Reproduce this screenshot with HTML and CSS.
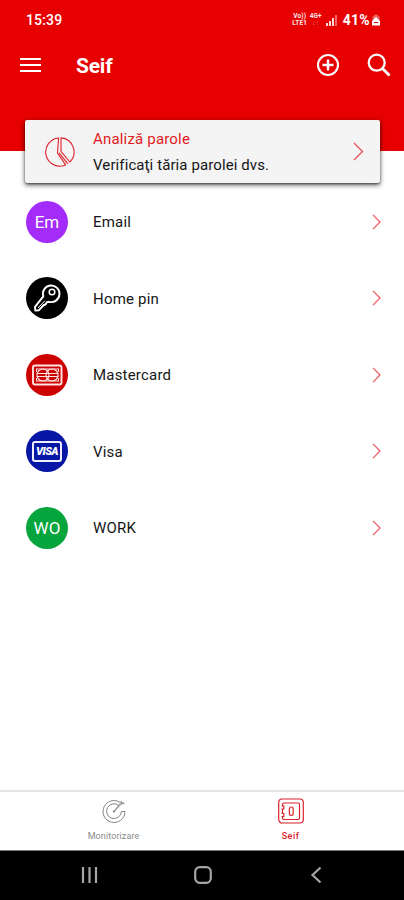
FILE: index.html
```
<!DOCTYPE html>
<html lang="ro">
<head>
<meta charset="utf-8">
<title>Seif</title>
<link rel="stylesheet" href="styles.css">
</head>
<body>
<div class="screen">
  <header class="header">
    <div class="status">
      <span class="time">15:39</span>
      <div class="indicators">
        <span class="net"><span>Vo))</span><span>LTE1</span></span>
        <span class="net net-data"><span>4G+</span><span class="faint">↓↑</span></span>
        <svg class="signal" width="12" height="12" viewBox="0 0 12 12"><path d="M0 9h2v3H0zM3 7h2v5H3zM6 4h2v8H6z" fill="#fff" opacity=".85"/><path d="M9 1h2v11H9z" fill="#fff" opacity=".4"/></svg>
        <span class="battery-level">41%</span>
        <svg class="battery" width="10" height="12" viewBox="0 0 10 12"><path d="M3 .8h4v1.500h1.500V6h-7V2.300H3z" fill="#fff" opacity=".4"/><path d="M1 7 5 3l4 4v4.500H1z" fill="#fff"/><path d="M3 8.500h4" stroke="#e60000"/></svg>
      </div>
    </div>
    <div class="toolbar">
      <svg class="menu" width="22" height="16" viewBox="0 0 22 16"><path d="M0 2h21M0 8h21M0 14h21" stroke="#fff" stroke-width="2.100"/></svg>
      <h1 class="title">Seif</h1>
      <svg class="add" width="24" height="24" viewBox="0 0 24 24" fill="none" stroke="#fff" stroke-width="2.100"><circle cx="12" cy="12" r="10"/><path d="M12 6.500v11M6.500 12h11" stroke-width="2.400"/></svg>
      <svg class="search" width="24" height="24" viewBox="0 0 24 24" fill="none" stroke="#fff" stroke-width="2.300"><circle cx="9.700" cy="9.700" r="8"/><path d="m15.500 15.500 7 7" stroke-width="2.800"/></svg>
    </div>
  </header>

  <section class="card">
    <svg class="pie" width="30" height="30" viewBox="0 0 30 30" fill="none" stroke="#dc1e28" stroke-width="1.100" stroke-linejoin="round"><path d="M13.600 1A14.100 14.100 0 1 0 20.600 27.900L12.500 16z"/><path d="M16 .9A14.100 14.100 0 0 1 24.800 25L16 14.300z"/><path d="m14 15.800 8.900 11"/></svg>
    <div class="card-text">
      <div class="card-title"><span>Analiză parole</span></div>
      <div class="card-sub"><span>Verificaţi tăria parolei dvs.</span></div>
    </div>
    <svg class="card-chevron" width="11" height="19" viewBox="0 0 11 19" fill="none" stroke="#e84a52" stroke-width="1.200"><path d="m1 1 8.500 8.500L1 18"/></svg>
  </section>

  <main class="list">
    <div class="row">
      <span class="avatar purple">Em</span>
      <span class="name">Email</span>
      <svg class="chevron" width="9" height="16" viewBox="0 0 9 16"><path d="m1 .8 7 7.200-7 7.200"/></svg>
    </div>
    <div class="row">
      <span class="avatar black"><svg width="42" height="42" viewBox="0 0 42 42" fill="none" stroke="#fff" stroke-width="1.900" stroke-linejoin="round"><path d="M17.300 19.300A8.300 8.300 0 1 1 23 24.800L20.800 25.200 19.600 27.500 17.700 28 13 33.200 9.300 33.500 9 29.900z"/><circle cx="26" cy="15" r="2.800" stroke-width="1.500"/><path d="m12 31 7-7.300" stroke-width="1"/></svg></span>
      <span class="name">Home pin</span>
      <svg class="chevron" width="9" height="16" viewBox="0 0 9 16"><path d="m1 .8 7 7.200-7 7.200"/></svg>
    </div>
    <div class="row">
      <span class="avatar red"><svg width="42" height="42" viewBox="0 0 42 42" fill="none" stroke="#ffe4e4"><rect x="7" y="11.500" width="28.500" height="19" rx="2" stroke-width="1.900"/><g stroke-width="1.100"><circle cx="17" cy="21" r="6"/><circle cx="26" cy="21" r="6"/><path d="M10.500 19.500h22M10.500 22.500h22M10.500 18v-3h22v3M10.500 24v3h22v-3"/></g></svg></span>
      <span class="name">Mastercard</span>
      <svg class="chevron" width="9" height="16" viewBox="0 0 9 16"><path d="m1 .8 7 7.200-7 7.200"/></svg>
    </div>
    <div class="row">
      <span class="avatar blue"><span class="visa">VISA</span></span>
      <span class="name">Visa</span>
      <svg class="chevron" width="9" height="16" viewBox="0 0 9 16"><path d="m1 .8 7 7.200-7 7.200"/></svg>
    </div>
    <div class="row">
      <span class="avatar green">WO</span>
      <span class="name">WORK</span>
      <svg class="chevron" width="9" height="16" viewBox="0 0 9 16"><path d="m1 .8 7 7.200-7 7.200"/></svg>
    </div>
  </main>

  <nav class="tabs">
    <div class="tab">
      <svg width="28" height="28" viewBox="0 0 28 28" fill="none" stroke="#858585" stroke-width="1"><path d="M21.300 6.300A11 11 0 1 0 25 14.500M19 8.700A7.400 7.400 0 1 0 21.400 14.500M25 14.500h-3.600M14 14.500 23.500 4.800M14 14.500l6-8M21.300 3.800v2.800h3"/><circle cx="14" cy="14.500" r=".8"/></svg>
      <span>Monitorizare</span>
    </div>
    <div class="tab active">
      <svg width="28" height="28" viewBox="0 0 28 28" fill="none" stroke="#dc222b" stroke-width="1.200"><rect x="1.700" y="2" width="24.600" height="24" rx="3.500"/><path d="M5.500 9V7.500Q5.500 6 7 6h14q1.500 0 1.500 1.500v13.500q0 1.500-1.500 1.500H7q-1.500 0-1.500-1.500V20M4.500 9h2.300v3H4.500M4.500 16.500h2.300v3H4.500M5.500 12v4.500"/><rect x="12.400" y="10" width="3.800" height="8.500" rx="1.900"/></svg>
      <span>Seif</span>
    </div>
  </nav>
  <footer class="system">
    <svg class="recents" width="18" height="18" viewBox="0 0 18 18"><path d="M2 1v16M8.500 1v16M15 1v16"/></svg>
    <svg class="homekey" width="18" height="18" viewBox="0 0 18 18"><rect x="1.200" y="1.200" width="15.600" height="15.600" rx="4.500"/></svg>
    <svg class="back" width="12" height="18" viewBox="0 0 12 18"><path d="M10.500 1.500 2.500 9l8 7.500"/></svg>
  </footer>
</div>
</body>
</html>
```

FILE: styles.css
```
* { box-sizing: border-box; }
body {
  margin: 0;
  font-family: Roboto, "Liberation Sans", sans-serif;
  color: #161616;
}
svg { display: block; flex: none; }
.screen {
  width: 404px;
  height: 900px;
  display: flex;
  flex-direction: column;
  background: #fff;
  overflow: hidden;
}
.header { height: 151px; flex: none; background: #e60000; color: #fff; }
.status {
  height: 40px;
  display: flex;
  align-items: center;
  justify-content: space-between;
  padding: 0 23px 0 26px;
}
.time { font-size: 14px; font-weight: 500; letter-spacing: .15px; }
.indicators { display: flex; align-items: center; }
.net {
  display: flex;
  flex-direction: column;
  width: 18px;
  font-size: 6.5px;
  line-height: 7px;
  font-weight: 700;
  letter-spacing: .1px;
  text-align: center;
  opacity: .92;
}
.net-data { width: 14px; margin-right: 3px; }
.faint { opacity: .5; }
.signal { margin-right: 5px; }
.battery-level { font-size: 14px; font-weight: 700; letter-spacing: .3px; }
.battery { margin-left: 1px; }
.toolbar {
  height: 50px;
  display: flex;
  align-items: center;
  padding: 0 13px 0 20px;
}
.title {
  margin: 1px auto 0 34px;
  font-size: 21px;
  line-height: 24px;
  font-weight: 700;
  letter-spacing: -.2px;
}
.add { margin-right: 27px; }
.search { margin-bottom: 1px; }
.card {
  position: relative;
  width: 355px;
  height: 63px;
  flex: none;
  margin: -31px 0 0 25px;
  padding: 0 16px 0 20px;
  display: flex;
  align-items: center;
  background: #f4f4f4;
  border-radius: 2px;
  box-shadow: 0 2px 5px rgba(0, 0, 0, .65), 0 1px 2px rgba(0, 0, 0, .4);
}
.card-text { margin-left: 18px; flex: 1; font-size: 15px; letter-spacing: .1px; }
.card-title, .card-sub { height: 26px; line-height: 26px; white-space: nowrap; }
.card-title { color: #e01b22; letter-spacing: .18px; }
.list { flex: 1; padding-top: .5px; }
.row {
  height: 76.5px;
  display: flex;
  align-items: center;
  padding: 0 23px 0 26px;
}
.avatar {
  width: 42px;
  height: 42px;
  border-radius: 50%;
  display: flex;
  align-items: center;
  justify-content: center;
  color: #fff;
  font-size: 17px;
}
.purple { background: #a32cfa; }
.black { background: #000; }
.red { background: #cc0000; }
.blue { background: #0717a5; }
.green { background: #06a53d; }
.visa {
  width: 30px;
  height: 21px;
  border: 2px solid #eef;
  border-radius: 3px;
  font-size: 11px;
  line-height: 17px;
  font-weight: 900;
  font-style: italic;
  letter-spacing: -.5px;
  text-align: center;
}
.name {
  margin-left: 25px;
  flex: 1;
  font-size: 15px;
  line-height: 20px;
  padding-top: 1px;
  letter-spacing: .2px;
}
.chevron { fill: none; stroke: #ee555d; stroke-width: 1.200; }
.tabs {
  height: 60px;
  flex: none;
  display: flex;
  padding: 0 25px;
  border-top: 2px solid #e5e5e5;
}
.tab {
  flex: 1;
  display: flex;
  flex-direction: column;
  align-items: center;
  padding-top: 5px;
  color: #898989;
  font-size: 9px;
  line-height: 11px;
  letter-spacing: .1px;
}
.tab span { margin-top: 6px; }
.active { color: #dc222b; }
.active span { font-weight: 500; letter-spacing: .5px; }
.system {
  height: 50px;
  flex: none;
  display: flex;
  align-items: center;
  padding: 0 82px 2px 81px;
  justify-content: space-between;
  background: #000;
  border-top: 1px solid #777;
}
.system svg { fill: none; stroke: #a5a5a5; stroke-width: 2.200; }
.homekey { margin: 0 4px 0 0; }
```
